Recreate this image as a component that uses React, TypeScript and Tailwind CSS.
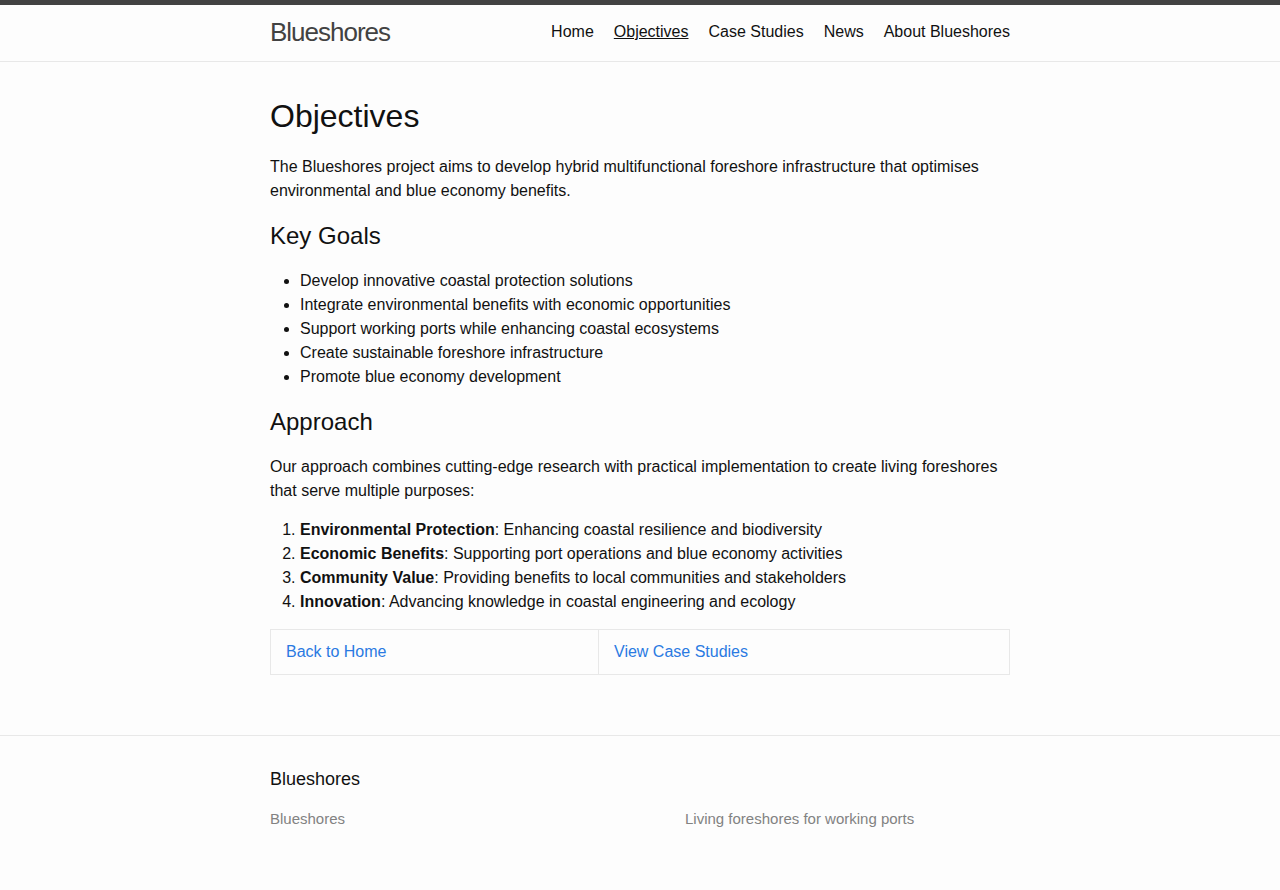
import React from "react";

export default function App() {
  const font = { fontFamily: '"Liberation Sans", Arial, Helvetica, sans-serif' };
  return (
    <div
      className="min-h-screen bg-[#fdfdfd] text-[#111111] text-[16px] leading-[24px]"
      style={font}
    >
      <header className="border-t-[5px] border-t-[#424242] border-b border-b-[#e8e8e8] min-h-[62px]">
        <div className="w-[740px] mx-auto flex justify-between items-start">
          <a className="text-[26px] leading-[54px] tracking-[-1px] text-[#424242]">Blueshores</a>
          <nav className="flex gap-5 leading-[54px] text-[#111111]">
            <a>Home</a>
            <a className="underline">Objectives</a>
            <a>Case Studies</a>
            <a>News</a>
            <a>About Blueshores</a>
          </nav>
        </div>
      </header>

      <main className="py-[30px]">
        <div className="w-[740px] mx-auto">
          <h1 className="text-[32px] leading-[48px] mb-[15px]">Objectives</h1>
          <p className="mb-[15px]">
            The Blueshores project aims to develop hybrid multifunctional foreshore infrastructure that optimises
            environmental and blue economy benefits.
          </p>
          <h2 className="text-[24px] leading-[36px] mb-[15px]">Key Goals</h2>
          <ul className="list-disc pl-[30px] mb-[15px]">
            <li>Develop innovative coastal protection solutions</li>
            <li>Integrate environmental benefits with economic opportunities</li>
            <li>Support working ports while enhancing coastal ecosystems</li>
            <li>Create sustainable foreshore infrastructure</li>
            <li>Promote blue economy development</li>
          </ul>
          <h2 className="text-[24px] leading-[36px] mb-[15px]">Approach</h2>
          <p className="mb-[15px]">
            Our approach combines cutting-edge research with practical implementation to create living foreshores
            that serve multiple purposes:
          </p>
          <ol className="list-decimal pl-[30px] mb-[15px]">
            <li>
              <strong>Environmental Protection</strong>: Enhancing coastal resilience and biodiversity
            </li>
            <li>
              <strong>Economic Benefits</strong>: Supporting port operations and blue economy activities
            </li>
            <li>
              <strong>Community Value</strong>: Providing benefits to local communities and stakeholders
            </li>
            <li>
              <strong>Innovation</strong>: Advancing knowledge in coastal engineering and ecology
            </li>
          </ol>
          <div className="flex border border-[#e8e8e8] mb-[30px]">
            <div className="w-[328px] px-[15px] py-[10px] border-r border-[#e8e8e8]">
              <a className="text-[#2a7ae2]">Back to Home</a>
            </div>
            <div className="flex-1 px-[15px] py-[10px]">
              <a className="text-[#2a7ae2]">View Case Studies</a>
            </div>
          </div>
        </div>
      </main>

      <footer className="border-t border-[#e8e8e8] py-[30px]">
        <div className="w-[740px] mx-auto">
          <h2 className="text-[18px] leading-[27px] mb-[15px]">Blueshores</h2>
          <div className="flex text-[15px] leading-[22.5px] text-[#828282]">
            <div className="w-[415px]">Blueshores</div>
            <div>Living foreshores for working ports</div>
          </div>
        </div>
      </footer>
    </div>
  );
}
